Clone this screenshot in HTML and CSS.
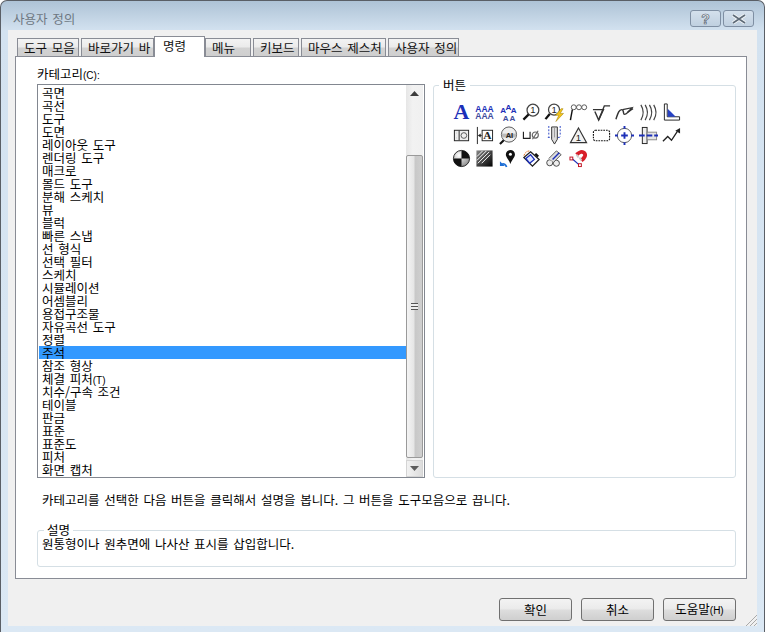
FILE: index.html
```html
<!DOCTYPE html>
<html lang="ko">
  <head>
    <meta charset="UTF-8" />
    <meta name="viewport" content="width=device-width, initial-scale=1.0" />
    <title>사용자 정의</title>
    <link rel="stylesheet" href="styles.css">
  </head>
  <body>
    <div class="window">
      <!-- Title bar -->
      <header class="titlebar">
        <span class="title">사용자 정의</span>
        <div class="caption-buttons">
          <button class="caption-btn" type="button">?</button>
          <button class="caption-btn" type="button">
            <svg width="16" height="10" viewBox="0 0 16 10"><path d="M2 1l12 8M14 1L2 9" stroke="#f4f6f8" stroke-width="3.4"/><path d="M2 1l12 8M14 1L2 9" stroke="#5e6b78" stroke-width="1.6"/></svg>
          </button>
        </div>
      </header>

      <div class="client">
        <!-- Tabs -->
        <nav class="tabs">
          <div class="tab tab-toolbars">도구 모음</div>
          <div class="tab tab-shortcut">바로가기 바</div>
          <div class="tab tab-active">명령</div>
          <div class="tab tab-menu">메뉴</div>
          <div class="tab tab-keyboard">키보드</div>
          <div class="tab tab-mouse">마우스 제스처</div>
          <div class="tab tab-custom">사용자 정의</div>
        </nav>

        <main class="panel">
          <div class="columns">
            <div class="category-label">카테고리<span class="latin">(C):</span></div>
            <div class="category-list">
              <ul class="items">
                <li>곡면</li>
                <li>곡선</li>
                <li>도구</li>
                <li>도면</li>
                <li>레이아웃 도구</li>
                <li>렌더링 도구</li>
                <li>매크로</li>
                <li>몰드 도구</li>
                <li>분해 스케치</li>
                <li>뷰</li>
                <li>블럭</li>
                <li>빠른 스냅</li>
                <li>선 형식</li>
                <li>선택 필터</li>
                <li>스케치</li>
                <li>시뮬레이션</li>
                <li>어셈블리</li>
                <li>용접구조물</li>
                <li>자유곡선 도구</li>
                <li>정렬</li>
                <li class="selected">주석</li>
                <li>참조 형상</li>
                <li>체결 피처<span class="latin">(T)</span></li>
                <li>치수/구속 조건</li>
                <li>테이블</li>
                <li>판금</li>
                <li>표준</li>
                <li>표준도</li>
                <li>피처</li>
                <li>화면 캡처</li>
              </ul>
              <div class="scrollbar">
                <div class="arrow"><svg width="9" height="5" viewBox="0 0 9 5"><path d="M4.500 0L9 5H0z" fill="#3c3c3c"/></svg></div>
                <div class="thumb"><span class="grip"></span></div>
                <div class="arrow arrow-down"><svg width="9" height="5" viewBox="0 0 9 5"><path d="M4.500 5L9 0H0z" fill="#5c5c5c"/></svg></div>
              </div>
            </div>

            <fieldset class="group group-buttons">
              <legend>버튼</legend>
              <div class="icons">
                <!-- row 1 -->
                <svg class="icon" viewBox="0 0 20 20"><text x="10" y="17" class="t-big">A</text></svg>
                <svg class="icon" viewBox="0 0 20 20"><text x="10" y="9" class="t-small">AAA</text><text x="10" y="17" class="t-small t-grey">AAA</text></svg>
                <svg class="icon" viewBox="0 0 20 20"><text x="10" y="7" class="t-tiny">A</text><text x="4.500" y="11" class="t-tiny">A</text><text x="15.500" y="11" class="t-tiny">A</text><text x="7" y="19" class="t-tiny t-grey">A</text><text x="14" y="19" class="t-tiny t-grey">A</text></svg>
                <svg class="icon" viewBox="0 0 20 20"><circle cx="11.500" cy="7.500" r="6.200" fill="#fff" stroke="#444" stroke-width="1.300"/><text x="11.500" y="11" class="t-num">1</text><path d="M7 12l-5.500 5.500" stroke="#111" stroke-width="2.400"/></svg>
                <svg class="icon" viewBox="0 0 20 20"><circle cx="9.500" cy="7" r="5.800" fill="#fff" stroke="#444" stroke-width="1.300"/><text x="9.500" y="10.500" class="t-num">1</text><path d="M5 11.500l-4.500 5.500" stroke="#111" stroke-width="2.400"/><path d="M17 6l-6 7h3.500l-3 6.500 8-8.500h-3.500l3-5z" fill="#f5c518" stroke="#a58410" stroke-width=".6"/></svg>
                <svg class="icon" viewBox="0 0 20 20" fill="none" stroke="#555"><circle cx="5" cy="4.500" r="2.600"/><circle cx="10.500" cy="4.500" r="2.600"/><circle cx="16" cy="4.500" r="2.600"/><path d="M3.500 7L1.500 18" stroke="#111" stroke-width="1.500"/></svg>
                <svg class="icon" viewBox="0 0 20 20" fill="none" stroke="#333" stroke-width="1.500"><path d="M1 7h11l-5 11L3 9"/><path d="M7 18l6-15h6"/></svg>
                <svg class="icon" viewBox="0 0 20 20" fill="none" stroke="#333" stroke-width="1.500"><path d="M1 17c2-6 3-10 6-10s1 5 3 5 5-4 9-6"/><path d="M8 7l10-2-5 5" stroke-width="1.200"/></svg>
                <svg class="icon" viewBox="0 0 20 20" fill="none" stroke="#444" stroke-width="1.300"><path d="M2 2c3 5 3 11 0 16M6.500 2c3 5 3 11 0 16M11 2c3 5 3 11 0 16M15.500 2c3 5 3 11 0 16"/></svg>
                <svg class="icon" viewBox="0 0 20 20"><path d="M2.500 1v17h16v-3.500H5.500V1z" fill="#fff" stroke="#222"/><path d="M6 6l8.500 8.500H6z" fill="#2742c4"/></svg>
                <!-- row 2 -->
                <svg class="icon" viewBox="0 0 20 20" fill="none"><rect x="2.500" y="4.500" width="15" height="11" fill="#eee" stroke="#222"/><path d="M7.500 5v10" stroke="#222"/><path d="M5 7.500h.1M5 12.500h.1" stroke="#222" stroke-width="1.500"/><circle cx="12.500" cy="10" r="3" stroke="#555"/></svg>
                <svg class="icon" viewBox="0 0 20 20" fill="none"><path d="M2.500 1v18" stroke="#222"/><path d="M3 10l3-2v4z" fill="#222"/><path d="M5 10h2" stroke="#222"/><rect x="7.500" y="4.500" width="11" height="11" fill="#fff" stroke="#222"/><text x="13" y="14" class="t-box">A</text></svg>
                <svg class="icon" viewBox="0 0 20 20"><circle cx="10.500" cy="9" r="8" fill="#eee" stroke="#555"/><path d="M3 8h15v4H3z" fill="#bbb"/><text x="11" y="13" class="t-ai">AI</text><path d="M5 15l-4 4" stroke="#111" stroke-width="2.200"/></svg>
                <svg class="icon" viewBox="0 0 20 20" fill="none" stroke="#222" stroke-width="1.200"><path d="M1.500 6v7h7V6"/><circle cx="14" cy="9.500" r="3.200" stroke="#666"/><path d="M11 14l6-9" stroke="#666"/></svg>
                <svg class="icon" viewBox="0 0 20 20" fill="none"><path d="M4 0v11M16 0v11M3 12h14" stroke="#2742c4" stroke-dasharray="2 1.500"/><path d="M7 1v13l3 5 3-5V1z" fill="#ddd" stroke="#333"/><path d="M10 2v10" stroke="#999"/></svg>
                <svg class="icon" viewBox="0 0 20 20"><path d="M10 2l8.500 15.500h-17z" fill="#f2f2f2" stroke="#333" stroke-width="1.200"/><text x="10" y="16" class="t-num">1</text></svg>
                <svg class="icon" viewBox="0 0 20 20" fill="none"><rect x="1.500" y="4.500" width="17" height="11" rx="2" stroke="#111" stroke-width="1.200" stroke-dasharray="1.800 1"/></svg>
                <svg class="icon" viewBox="0 0 20 20" fill="none"><circle cx="10" cy="10" r="7.500" stroke="#555"/><path d="M10 6.500v7M6.500 10h7" stroke="#1c2fb8" stroke-width="2"/><path d="M10 0v3M10 17v3M0 10h3M17 10h3" stroke="#1c2fb8" stroke-width="2"/></svg>
                <svg class="icon" viewBox="0 0 20 20" fill="none"><rect x="3.500" y="1.500" width="5" height="17" fill="#eee" stroke="#222"/><rect x="8.500" y="6.500" width="10" height="8" fill="#e4e4e4" stroke="#888"/><path d="M0 10h20" stroke="#1c2fb8" stroke-width="2" stroke-dasharray="6 2"/></svg>
                <svg class="icon" viewBox="0 0 20 20" fill="none"><path d="M1 16l5-5 4 4 6-9" stroke="#222" stroke-width="1.400"/><path d="M14 5l5-3v6z" fill="#222"/></svg>
                <!-- row 3 -->
                <svg class="icon" viewBox="0 0 20 20"><defs><radialGradient id="ball" cx=".35" cy=".3" r=".8"><stop offset="0" stop-color="#fff"/><stop offset="1" stop-color="#888"/></radialGradient></defs><circle cx="10" cy="10" r="8.500" fill="url(#ball)" stroke="#222"/><path d="M10 10V1.500a8.500 8.500 0 0 1 8.500 8.500zM10 10v8.500A8.500 8.500 0 0 1 1.500 10z" fill="#111"/></svg>
                <svg class="icon" viewBox="0 0 20 20"><defs><linearGradient id="hatch" x1="0" y1="0" x2="1" y2="1"><stop offset="0" stop-color="#888"/><stop offset="1" stop-color="#000"/></linearGradient></defs><rect x="1.500" y="1.500" width="17" height="17" fill="url(#hatch)"/><path d="M2 8l6-6M2 12l10-10M3 15L15 3M7 15l9-9" stroke="#fff"/></svg>
                <svg class="icon" viewBox="0 0 20 20"><path d="M12 1a4.800 4.800 0 0 0-4.800 4.800c0 3 3 5 4.800 10 1.800-5 4.800-7 4.800-10A4.800 4.800 0 0 0 12 1z" fill="#111"/><circle cx="12" cy="5.500" r="1.600" fill="#fff"/><path d="M8 19c-1-3-3-4-5-3" fill="none" stroke="#1f6fd6" stroke-width="1.800"/><path d="M1 13v5h5z" fill="#1f6fd6"/></svg>
                <svg class="icon" viewBox="0 0 20 20" fill="none"><path d="M9 3l9 8-7 7-9-9z" fill="#fff" stroke="#222" stroke-width="1.400"/><path d="M14 5l3 3" stroke="#111" stroke-width="2.500"/><path d="M4 10l5-4 4 5-5 4z" fill="#dfe6ff" stroke="#1c2fb8" stroke-width="1.400"/><path d="M2 7c1-3 3-5 6-5" stroke="#e8701a" stroke-dasharray="2 1"/></svg>
                <svg class="icon" viewBox="0 0 20 20" fill="none"><circle cx="5" cy="14.500" r="3.200" fill="#eee" stroke="#444"/><circle cx="12" cy="15" r="3.200" fill="#eee" stroke="#444"/><path d="M4 10l8-8 5 4-8 8" fill="#ddd" stroke="#555"/><path d="M8 11l7-7" stroke="#1c2fb8" stroke-width="1.500"/></svg>
                <svg class="icon" viewBox="0 0 20 20" fill="none"><path d="M8 6c3-3 6-4 8-2s1 5-3 8" stroke="#d81f2a" stroke-width="4"/><path d="M8 6l2 3M13 12l-2-3" stroke="#ccc" stroke-width="2"/><path d="M3 10l8 7" stroke="#1c2fb8" stroke-width="1.200"/><rect x="1" y="8.500" width="3" height="3" fill="#fff" stroke="#c01020"/><rect x="10" y="15.500" width="3" height="3" fill="#fff" stroke="#c01020"/></svg>
              </div>
            </fieldset>
          </div>

          <p class="help">카테고리를 선택한 다음 버튼을 클릭해서 설명을 봅니다. 그 버튼을 도구모음으로 끕니다.</p>

          <fieldset class="group group-desc">
            <legend>설명</legend>
            <p class="desc">원통형이나 원추면에 나사산 표시를 삽입합니다.</p>
          </fieldset>
        </main>

        <footer class="actions">
          <button class="btn" type="button">확인</button>
          <button class="btn" type="button">취소</button>
          <button class="btn" type="button">도움말<span class="latin">(H)</span></button>
        </footer>

        <svg class="resize-grip" width="12" height="11" viewBox="0 0 12 11"><path d="M12 0L1 11M12 4L5 11M12 8L9 11" stroke="#a9a9a9" fill="none"/></svg>
      </div>
    </div>
  </body>
</html>
```

FILE: styles.css
```css
* {
  box-sizing: border-box;
}

body {
  margin: 0;
  padding: 0;
  font-family: "Noto Sans CJK KR", "Liberation Sans", sans-serif;
  font-size: 12.5px;
  line-height: 13px;
  word-spacing: 1.2px;
  color: #000;
  background: #fff;
}

.latin {
  font-family: "Liberation Sans", sans-serif;
  font-size: 10px;
}

.window {
  width: 765px;
  height: 632px;
  display: flex;
  flex-direction: column;
  padding: 0 7px 6px 7px;
  border: 1px solid #5a5f66;
  border-bottom: none;
  border-radius: 7px 7px 0 0;
  background: linear-gradient(#aec3d6 0, #d3e2f0 30px, #dbe8f4 100%);
}

.titlebar {
  height: 29px;
  flex-shrink: 0;
  display: flex;
  justify-content: space-between;
  padding: 9px 3px 0 5px;
}

.title {
  color: #6d7781;
  line-height: 18px;
}

.caption-buttons {
  display: flex;
  gap: 2px;
}

.caption-btn {
  width: 31px;
  height: 17px;
  padding: 0;
  display: flex;
  align-items: center;
  justify-content: center;
  border: 1px solid #7f8fa3;
  border-radius: 3px;
  background: linear-gradient(#d4e0ec, #c0d0e0);
  font-family: "Liberation Sans", sans-serif;
  font-size: 14px;
  font-weight: bold;
  color: #f4f6f8;
  -webkit-text-stroke: 0.7px #55616e;
}

.client {
  flex: 1;
  position: relative;
  padding: 6px 10px 0 7px;
  background: #f0f0f0;
}

/* tabs */
.tabs {
  display: flex;
  align-items: flex-end;
  gap: 2px;
  height: 20px;
  padding-left: 2px;
}

.tab {
  height: 18px;
  padding: 2px 0 0 6px;
  border: 1px solid #898c95;
  border-bottom: none;
  background: linear-gradient(#f3f3f3 0, #ebebeb 45%, #d2d2d2 55%, #cfcfcf 100%);
  white-space: nowrap;
  color: #111;
}

.tab-toolbars { width: 62px; }
.tab-shortcut { width: 73px; }
.tab-menu { width: 46px; margin-left: -2px; }
.tab-keyboard { width: 46px; }
.tab-mouse { width: 85px; }
.tab-custom { width: 71px; }

.tab-active {
  position: relative;
  z-index: 1;
  width: 51px;
  height: 21px;
  margin: 0 0 -1px -2px;
  padding: 2px 0 0 8px;
  background: #fff;
}

.panel {
  width: 732px;
  height: 523px;
  padding: 0 0 0 21px;
  border: 1px solid #898c95;
  background: #fff;
}

.columns {
  display: grid;
  grid-template-columns: 388px 303px;
  grid-template-rows: 27px 394px;
  column-gap: 8px;
}

.category-label {
  padding-top: 10px;
}

.category-list {
  grid-column: 1;
  grid-row: 2;
  display: flex;
  border: 1px solid #828790;
}

.items {
  flex: 1;
  margin: 0;
  padding: 1px 0 0 1px;
  list-style: none;
}

.items li {
  height: 13px;
  padding-left: 3px;
  white-space: nowrap;
}

.items .selected {
  background: #3399ff;
}

.scrollbar {
  width: 17px;
  margin-right: 1px;
  display: flex;
  flex-direction: column;
  background: linear-gradient(90deg, #e6e6e6, #f2f2f2 40%, #f0f0f0);
}

.arrow {
  height: 17px;
  display: flex;
  align-items: center;
  justify-content: center;
}

.arrow-down {
  margin-top: auto;
  background: linear-gradient(90deg, #f2f2f2, #dcdcdc);
  border: 1px solid #d4d4d4;
}

.thumb {
  height: 303px;
  margin-top: 53px;
  display: flex;
  align-items: center;
  justify-content: center;
  border: 1px solid #9a9a9a;
  border-radius: 2px;
  background: linear-gradient(90deg, #f4f4f4, #e6e6e6 45%, #c8c8c8 55%, #cfcfcf);
}

.grip {
  width: 7px;
  height: 7px;
  background: repeating-linear-gradient(#555 0, #555 1px, #eee 1px, #eee 3px);
}

/* group boxes */
.group {
  margin: 0;
  padding: 0;
  min-width: 0;
  border: 1px solid #d5dfe5;
  border-radius: 3px;
}

.group legend {
  height: 14px;
  padding: 0 4px;
  margin-left: 5px;
  line-height: 14px;
}

.group-buttons {
  grid-column: 2;
  grid-row: 1 / span 2;
  align-self: end;
  height: 400px;
}

.icons {
  display: grid;
  grid-template-columns: repeat(10, 23.33px);
  grid-auto-rows: 23px;
  justify-items: center;
  align-items: center;
  padding: 9px 0 0 16px;
}

.icon {
  width: 19px;
  height: 19px;
  overflow: visible;
}

.icon text {
  text-anchor: middle;
  fill: #1c2fb8;
  font-family: "Liberation Serif", serif;
  font-weight: bold;
}

.icon .t-big { font-size: 23px; }
.icon .t-small { font-size: 9px; font-family: "Liberation Sans", sans-serif; }
.icon .t-tiny { font-size: 8.5px; font-family: "Liberation Sans", sans-serif; }
.icon .t-grey { fill: #3f4c9e; }
.icon .t-num { font-size: 10px; fill: #222; font-weight: normal; font-family: "Liberation Sans", sans-serif; }
.icon .t-box { font-size: 12px; fill: #222; }
.icon .t-ai { font-size: 8px; fill: #222; font-family: "Liberation Sans", sans-serif; }

.help {
  margin: 15px 0 0 5px;
}

.group-desc {
  width: 699px;
  height: 44px;
  margin-top: 17px;
}

.group-desc legend {
  padding: 0 3px;
  margin-left: 6px;
}

.desc {
  margin: 0 0 0 4px;
}

/* bottom buttons */
.actions {
  display: flex;
  justify-content: flex-end;
  gap: 9px;
  padding: 19px 11px 0 0;
}

.btn {
  width: 73px;
  height: 23px;
  padding: 0;
  border: 1px solid #707070;
  border-radius: 3px;
  background: linear-gradient(#f3f3f3 0, #ebebeb 45%, #dcdcdc 55%, #cfcfcf 100%);
  font-family: inherit;
  font-size: 12.5px;
  line-height: 13px;
  word-spacing: 1.2px;
  color: #000;
}

.resize-grip {
  position: absolute;
  right: 0;
  bottom: 0;
}
```
